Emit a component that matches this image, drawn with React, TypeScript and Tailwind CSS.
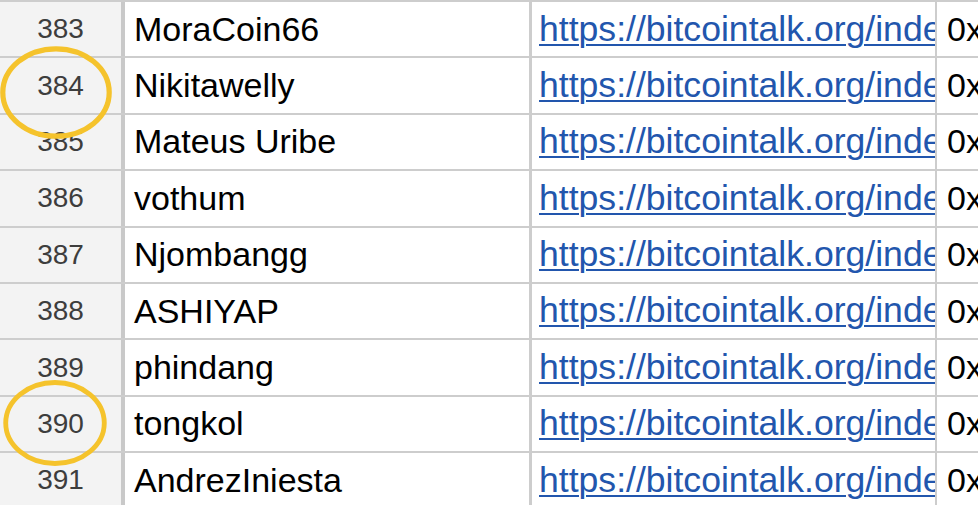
import React from "react";

const rows = [
  { n: 383, name: "MoraCoin66" },
  { n: 384, name: "Nikitawelly" },
  { n: 385, name: "Mateus Uribe" },
  { n: 386, name: "vothum" },
  { n: 387, name: "Njombangg" },
  { n: 388, name: "ASHIYAP" },
  { n: 389, name: "phindang" },
  { n: 390, name: "tongkol" },
  { n: 391, name: "AndrezIniesta" },
];

const Ring = ({ className }: { className: string }) => (
  <svg className={className} viewBox="0 0 120 100" fill="none">
    <ellipse cx="60" cy="50" rx="56" ry="46" stroke="#f5c32c" strokeWidth="5.5" />
  </svg>
);

const SheetPage = () => {
  return (
    <main
      className="relative w-[978px] h-[505px] overflow-hidden bg-white"
      style={{ fontFamily: '"Liberation Sans", Arial, sans-serif' }}
    >
      <div className="flex flex-col">
        {rows.map((r) => (
          <div
            key={r.n}
            className="flex h-[56.4px] shrink-0 border-t-2 border-[#cdcdcd]"
          >
            <div className="w-[125px] shrink-0 flex items-center justify-center bg-[#f3f3f3] border-r-4 border-[#c9c9c9] text-[28px] text-[#3d3d3d]">
              {r.n}
            </div>
            <div className="w-[407px] shrink-0 flex items-center pl-[9px] border-r-[3px] border-[#cdcdcd] text-[34px] text-black whitespace-nowrap overflow-hidden">
              {r.name}
            </div>
            <div className="w-[405px] shrink-0 flex items-center pl-[7px] border-r-2 border-[#cdcdcd] text-[35.6px] text-[#2256ad] whitespace-nowrap overflow-hidden">
              <span className="underline decoration-2 underline-offset-[3px]">
                https://bitcointalk.org/index.php?action=profile
              </span>
            </div>
            <div className="flex-1 flex items-center pl-[10px] text-[34px] text-black whitespace-nowrap overflow-hidden">
              0x
            </div>
          </div>
        ))}
      </div>

      <Ring className="absolute left-[-1px] top-[44px] w-[114px] h-[97px]" />
      <Ring className="absolute left-[2px] top-[379px] w-[106px] h-[88px]" />
    </main>
  );
};

export default SheetPage;
